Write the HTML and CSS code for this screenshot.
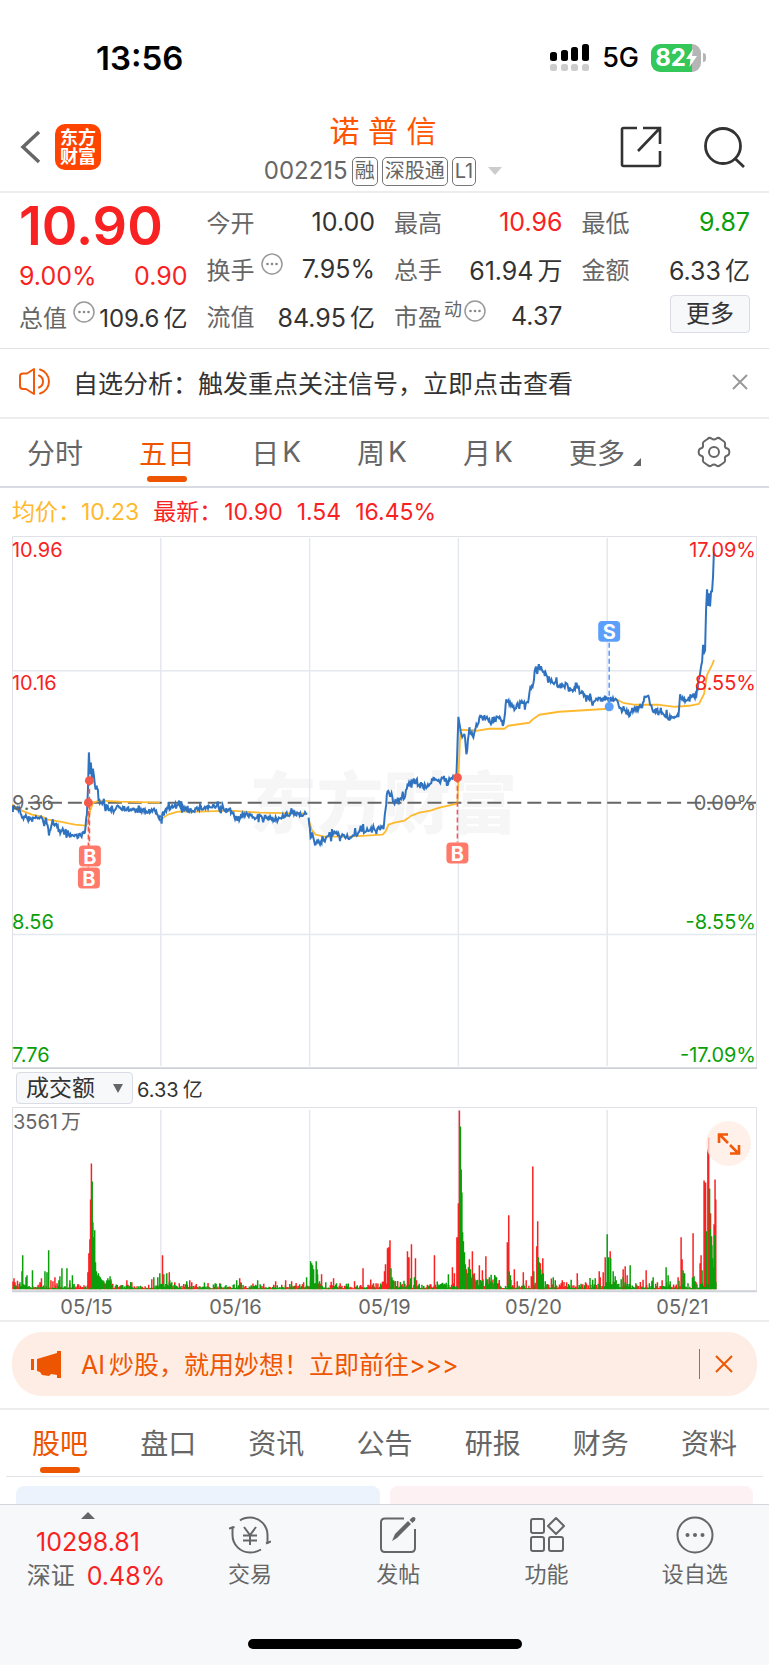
FILE: index.html
```html
<!DOCTYPE html>
<html lang="zh-CN">
<head>
<meta charset="utf-8">
<meta name="viewport" content="width=device-width, initial-scale=1">
<title>诺普信 002215</title>
<link rel="stylesheet" href="styles.css">
</head>
<body>
<div class="app">
  <div class="status">
    <span class="status-time">13:56</span>
    <div class="status-right">
      <svg class="signal" width="40" height="28" viewBox="0 0 40 28" aria-hidden="true">
        <g fill="#000"><rect x="0" y="8" width="7" height="9" rx="2.5"/><rect x="11" y="6" width="7" height="11" rx="2.5"/><rect x="21" y="3" width="7" height="14" rx="2.5"/><rect x="32" y="0" width="7" height="17" rx="2.5"/></g>
        <g fill="#ccc"><rect x="0" y="20" width="7" height="7" rx="2.5"/><rect x="11" y="20" width="7" height="7" rx="2.5"/><rect x="21" y="20" width="7" height="7" rx="2.5"/><rect x="32" y="20" width="7" height="7" rx="2.5"/></g>
      </svg>
      <span class="status-net">5G</span>
      <span class="battery"><span class="battery-num">82</span><svg width="11" height="18" viewBox="0 0 11 18" aria-hidden="true"><path d="M7 0L0 10h4.500L3.500 18 11 7H6z" fill="#fff"/></svg></span>
      <span class="battery-nub"></span>
    </div>
  </div>

  <header class="header">
    <div class="header-left">
      <button class="icon-btn" aria-label="返回"><svg width="21" height="34" viewBox="0 0 21 34"><path d="M19 2L3 17l16 15" fill="none" stroke="#666" stroke-width="3.500"/></svg></button>
      <span class="logo">东方<br>财富</span>
    </div>
    <div class="header-mid">
      <h1 class="name">诺 普 信</h1>
      <div class="code-row">
        <span class="code">002215</span><span class="tag">融</span><span class="tag">深股通</span><span class="tag">L1</span>
        <button class="icon-btn caret" aria-label="展开"><svg width="14" height="8" viewBox="0 0 14 8"><path d="M0 0h14L7 8z" fill="#ccc"/></svg></button>
      </div>
    </div>
    <div class="header-right">
      <button class="icon-btn" aria-label="分享"><svg width="42" height="42" viewBox="0 0 42 42"><g fill="none" stroke="#333" stroke-width="2.600"><path d="M17 2H3.500Q2 2 2 3.500v35Q2 40 3.500 40H38.500Q40 40 40 38.500V25"/><path d="M23 2h17v16M40 2L18 25"/></g></svg></button>
      <button class="icon-btn" aria-label="搜索"><svg width="42" height="42" viewBox="0 0 42 42"><g fill="none" stroke="#333" stroke-width="2.800"><circle cx="19" cy="20" r="17.500"/><path d="M30.500 32l9.500 9"/></g></svg></button>
    </div>
  </header>

  <section class="quote">
    <div class="col">
      <div class="price up">10.90</div>
      <div class="change up"><span>9.00%</span><span>0.90</span></div>
      <div class="row row-last"><span class="label">总值</span><svg class="more-dot" viewBox="0 0 22 22"><use href="#dots"/></svg><span class="value">109.6<span class="unit">亿</span></span></div>
    </div>
    <div class="col">
      <div class="row"><span class="label">今开</span><span class="value">10.00</span></div>
      <div class="row"><span class="label">换手</span><svg class="more-dot" viewBox="0 0 22 22"><use href="#dots"/></svg><span class="value">7.95%</span></div>
      <div class="row"><span class="label">流值</span><span class="value">84.95<span class="unit">亿</span></span></div>
    </div>
    <div class="col">
      <div class="row"><span class="label">最高</span><span class="value up">10.96</span></div>
      <div class="row"><span class="label">总手</span><span class="value">61.94<span class="unit">万</span></span></div>
      <div class="row"><span class="label">市盈</span><span class="sup">动</span><svg class="more-dot tight" viewBox="0 0 22 22"><use href="#dots"/></svg><span class="value">4.37</span></div>
    </div>
    <div class="col">
      <div class="row"><span class="label">最低</span><span class="value down">9.87</span></div>
      <div class="row"><span class="label">金额</span><span class="value">6.33<span class="unit">亿</span></span></div>
      <div class="row"><button class="more-btn">更多</button></div>
    </div>
  </section>

  <section class="notice">
    <svg width="34" height="30" viewBox="0 0 34 30" aria-hidden="true"><g fill="none" stroke="#f05a0a" stroke-width="2" stroke-linecap="round" stroke-linejoin="round"><path d="M15 2v25L7 22H4Q1 22 1 19V9q0-2.500 3-2.500h4z"/><path d="M20 8.500a6.500 6.500 0 0 1 0 12M21 2.500a12.500 12.500 0 0 1 0 24"/></g></svg>
    <span class="notice-text">自选分析：触发重点关注信号，立即点击查看</span>
    <button class="icon-btn" aria-label="关闭提示"><svg width="18" height="18" viewBox="0 0 18 18"><path d="M2 2l14 14M16 2L2 16" stroke="#999" stroke-width="2"/></svg></button>
  </section>

  <nav class="periods">
    <button class="period">分时</button>
    <button class="period active">五日</button>
    <button class="period">日<span class="k">K</span></button>
    <button class="period">周<span class="k">K</span></button>
    <button class="period">月<span class="k">K</span></button>
    <button class="period">更多<svg class="corner" width="8" height="8" viewBox="0 0 8 8"><path d="M8 0v8H0z" fill="#666"/></svg></button>
    <button class="period" aria-label="设置"><svg width="34" height="32" viewBox="0 0 34 32"><g fill="none" stroke="#666" stroke-width="2"><path stroke-linejoin="round" d="M10.500 3Q12.500 1 14.500 2.500Q17 4.500 19.500 2.500Q21.500 1 23.500 3L27 5.500Q28.500 6.500 28 9Q27.500 12 30.500 12.500Q32.500 13.500 32.300 16Q32.500 18.500 30.500 19.500Q27.500 20 28 23Q28.500 25.500 27 26.500L23.500 29Q21.500 31 19.500 29.500Q17 27.500 14.500 29.500Q12.500 31 10.500 29L7 26.500Q5.500 25.500 6 23Q6.500 20 3.500 19.500Q1.500 18.500 1.700 16Q1.500 13.500 3.500 12.500Q6.500 12 6 9Q5.500 6.500 7 5.500Z"/><circle cx="17" cy="16" r="5"/></g></svg></button>
  </nav>

  <div class="legend">
    <span class="avg">均价：10.23</span><span class="up">最新：</span><span class="up">10.90</span><span class="up">1.54</span><span class="up">16.45%</span>
  </div>

  <main class="charts">
    <svg class="chart" viewBox="12 536 746 534" role="img" aria-label="五日分时图">
      <text class="watermark" x="250" y="828">东方财富</text>
      <g class="grid"><path d="M161 538V1067M310 538V1067M459 538V1067M608 538V1067M13 671H757M13 935H757"/></g>
      <path class="frame" d="M12.500 1069V536.500H757.500V1069"/><path class="base" d="M12 1069H758"/>
      <path class="zero" d="M28 803H757"/>
      <g id="priceLines"></g>
      <g class="buy">
        <path d="M89.500 781V846M88.500 803V868M458 778V843"/>
        <circle cx="89.500" cy="781" r="4.500"/><circle cx="88.500" cy="803" r="4.500"/><circle cx="458" cy="778" r="4.500"/>
        <rect x="79" y="846" width="22" height="21" rx="4"/><rect x="78" y="868" width="22" height="21" rx="4"/><rect x="447" y="843" width="22" height="21" rx="4"/>
      </g>
      <g class="sell"><path d="M610 643V704"/><circle cx="610" cy="707" r="4.500"/><rect x="599" y="621" width="22" height="21" rx="4"/></g>
      <g class="mark"><text x="90" y="864">B</text><text x="89" y="886">B</text><text x="458" y="861">B</text><text x="610" y="639">S</text></g>
      <g class="axis">
        <text class="red" x="12" y="557">10.96</text><text class="red" x="12" y="690">10.16</text><text x="12" y="810">9.36</text><text class="green" x="12" y="930">8.56</text><text class="green" x="12" y="1063">7.76</text>
        <g class="end"><text class="red" x="757" y="557">17.09%</text><text class="red" x="757" y="690">8.55%</text><text x="757" y="810">0.00%</text><text class="green" x="757" y="930">-8.55%</text><text class="green" x="757" y="1063">-17.09%</text></g>
      </g>
    </svg>

    <div class="indicator">
      <span class="select-wrap"><select class="select" aria-label="指标"><option>成交额</option></select><svg class="select-arrow" width="10" height="9" viewBox="0 0 10 9"><path d="M0 0h10L5 9z" fill="#666"/></svg></span>
      <span class="turnover">6.33<span class="unit">亿</span></span>
    </div>

    <div class="volume">
      <svg class="chart" viewBox="12 1107 746 186" role="img" aria-label="成交额柱状图">
        <g class="grid"><path d="M161 1110V1289M310 1110V1289M459 1110V1289M608 1110V1289"/></g>
        <path class="frame" d="M12.500 1290V1107.500H757.500V1290"/><path class="base" d="M12 1291.500H758"/>
        <g id="volumeBars"></g>
        <text class="vol-label" x="13" y="1129">3561<tspan dx="3">万</tspan></text>
      </svg>
      <button class="expand" aria-label="放大"><svg width="24" height="24" viewBox="0 0 24 24"><g fill="none" stroke="#f05a0a" stroke-width="2.600"><path d="M2 11V2.500H11M3 3l8 8M22 13v8.500H13M21 21l-8-8"/></g></svg></button>
    </div>
    <div class="dates"><span>05/15</span><span>05/16</span><span>05/19</span><span>05/20</span><span>05/21</span></div>
  </main>

  <section class="promo-wrap">
    <div class="promo">
      <svg width="30" height="27" viewBox="0 0 30 27" aria-hidden="true"><path d="M0 8h3v11H0zM6 8L26 2V0h4v27h-4v-3l-6-1-2 2-7-1-2-3-3-1z" fill="#ee5500"/></svg>
      <a class="promo-link" href="#ai">AI<span class="unit">炒股，就用妙想！立即前往&gt;&gt;&gt;</span></a>
      <span class="promo-bar"></span>
      <button class="icon-btn" aria-label="关闭广告"><svg width="18" height="18" viewBox="0 0 18 18"><path d="M1 1l16 16M17 1L1 17" stroke="#ee5500" stroke-width="2"/></svg></button>
    </div>
  </section>

  <nav class="sections">
    <button class="section-tab active">股吧</button><button class="section-tab">盘口</button><button class="section-tab">资讯</button><button class="section-tab">公告</button><button class="section-tab">研报</button><button class="section-tab">财务</button><button class="section-tab">资料</button>
  </nav>
  <div class="cards"><div class="card blue"></div><div class="card pink"></div></div>

  <footer class="bottom">
    <div class="bottom-row">
      <button class="index">
        <svg width="14" height="7" viewBox="0 0 14 7"><path d="M0 7h14L7 0z" fill="#666"/></svg>
        <span class="up">10298.81</span>
        <span class="index-line"><span>深证</span><span class="up">0.48%</span></span>
      </button>
      <button class="tool"><svg width="42" height="38" viewBox="0 0 42 38"><g fill="none" stroke="#666" stroke-width="2"><path d="M11 4.500Q15 1.500 21 1.500A17.500 17.500 0 0 1 38.500 19V27.500"/><path d="M32 33.500Q27 36.500 21 36.500A17.500 17.500 0 0 1 3.500 19V10.500"/><path d="M0 12.500L5.500 11M42 25.500L37 27.500"/><path d="M15 11l6 8 6-8M21 19v10M14 19.500h14M14 24.500h14"/></g></svg><span>交易</span></button>
      <button class="tool"><svg width="38" height="38" viewBox="0 0 38 38"><path d="M25 2.500H6Q2 2.500 2 6.500V32Q2 36 6 36H32Q36 36 36 32V13" fill="none" stroke="#666" stroke-width="2"/><path d="M13 25l3-7L29 5l3 3L18 22z" fill="#666"/><path d="M30.500 4L33 1.500q2-1 3 0t0 3L33.500 7z" fill="#666"/></svg><span>发帖</span></button>
      <button class="tool"><svg width="38" height="38" viewBox="0 0 38 38"><g fill="none" stroke="#666" stroke-width="2"><rect x="3" y="3" width="13" height="14" rx="2"/><rect x="3" y="21" width="13" height="14" rx="2"/><rect x="21" y="21" width="14" height="14" rx="2"/><path stroke-linejoin="round" d="M28 2l8 8-8 8-8-8z"/></g></svg><span>功能</span></button>
      <button class="tool"><svg width="38" height="38" viewBox="0 0 38 38"><circle cx="19" cy="19" r="17.500" fill="none" stroke="#666" stroke-width="2"/><g fill="#666"><circle cx="11.500" cy="19" r="2"/><circle cx="19" cy="19" r="2"/><circle cx="26.500" cy="19" r="2"/></g></svg><span>设自选</span></button>
    </div>
    <div class="home"></div>
  </footer>
</div>
<svg class="defs" aria-hidden="true"><symbol id="dots" viewBox="0 0 22 22"><circle cx="11" cy="11" r="10" fill="none" stroke="#999" stroke-width="1.500"/><g fill="#888"><circle cx="6.500" cy="11" r="1.300"/><circle cx="11" cy="11" r="1.300"/><circle cx="15.500" cy="11" r="1.300"/></g></symbol></svg>
<script src="chart.js"></script>
</body>
</html>
```

FILE: styles.css
```css
* { box-sizing: border-box; }
body { margin: 0; background: #fff; color: #333; font-family: Inter, "Noto Sans CJK SC", sans-serif; }
button { border: 0; padding: 0; background: none; font: inherit; color: inherit; cursor: pointer; }
svg { display: block; flex: none; }
.defs { position: absolute; width: 0; height: 0; }
.app { display: flex; flex-direction: column; min-height: 100vh; }
.icon-btn { display: flex; align-items: center; }
.up { color: #f92222; }
.down { color: #0a9f0a; }

.status { display: flex; justify-content: space-between; align-items: center; height: 115px; padding: 0 63px 0 96px; color: #000; }
.status-time { font-size: 33px; font-weight: 600; }
.status-right { display: flex; align-items: center; }
.status-net { margin: 0 12px; font-size: 27px; font-weight: 500; }
.battery { display: flex; align-items: center; justify-content: center; width: 50px; height: 28px; border-radius: 9px; background: linear-gradient(90deg, #34c759 82%, #b5b5b5 82%); color: #fff; }
.battery-num { font-size: 24px; font-weight: 700; }
.battery-nub { width: 3px; height: 9px; margin-left: 2px; border-radius: 0 3px 3px 0; background: #b5b5b5; }

.header { display: grid; grid-template-columns: 1fr auto 1fr; align-items: center; height: 78px; padding: 0 23px 0 20px; border-bottom: 2px solid #ededed; }
.header-left { display: flex; align-items: center; gap: 14px; padding-bottom: 12px; }
.logo { padding: 4px 5px; border-radius: 10px; background: #ff4400; color: #fff; font-size: 18px; line-height: 19px; font-weight: 700; }
.header-mid { display: flex; flex-direction: column; align-items: center; gap: 5px; padding-bottom: 2px; }
.name { margin: 0; color: #ff5500; font-size: 30px; line-height: 33px; font-weight: 400; }
.code-row { display: flex; align-items: center; gap: 4px; color: #666; font-size: 24px; line-height: 36px; }
.tag { padding: 0 2px; border: 1px solid #777; border-radius: 5px; font-size: 20px; line-height: 27px; }
.caret { margin-left: 8px; }
.header-right { display: flex; justify-content: flex-end; gap: 42px; padding-bottom: 12px; }

.quote { display: grid; grid-template-columns: repeat(4, 1fr); column-gap: 19px; padding: 5px 19px 9px; border-bottom: 1px solid #e2e2e2; }
.row { display: flex; align-items: center; height: 47px; }
.label { color: #666; font-size: 24px; }
.value { margin-left: auto; font-size: 25px; white-space: nowrap; }
.unit { margin-left: 4px; }
.more-dot { width: 22px; height: 22px; margin: 0 0 10px 6px; }
.more-dot.tight { margin-left: 2px; }
.sup { margin: 0 0 16px 2px; color: #666; font-size: 18px; }
.price { height: 55px; font-size: 54px; line-height: 55px; font-weight: 600; }
.change { display: flex; justify-content: space-between; height: 46px; font-size: 25px; line-height: 46px; }
.row-last { height: 35px; }
.row-last .value { font-size: 24px; }
.more-btn { width: 80px; height: 38px; margin: 0 0 4px auto; border: 1px solid #d9dce5; border-radius: 4px; background: #f7f8fa; font-size: 24px; line-height: 32px; }

.notice { display: flex; align-items: center; height: 70px; padding: 0 20px 2px 19px; border-bottom: 2px solid #ededed; }
.notice-text { flex: 1; margin-left: 20px; font-size: 25px; }

.periods { display: flex; justify-content: space-between; height: 69px; padding: 0 38px 2px 27px; border-bottom: 2px solid #d9dbe3; color: #666; }
.period { position: relative; display: flex; align-items: center; font-size: 28px; }
.k { margin-left: 3px; }
.corner { margin: 20px 0 0 8px; }
.active { color: #ee5500; }
.active::after { content: ""; position: absolute; bottom: 2px; left: 50%; width: 40px; height: 6px; margin-left: -20px; border-radius: 3px; background: #ee5500; }

.legend { display: flex; gap: 14px; padding: 0 12px; height: 48px; font-size: 23px; line-height: 48px; }
.legend .avg { color: #ffb92e; }
.legend .up:nth-child(2) { margin-right: -12px; }

.charts { padding: 0 12px; border-bottom: 2px solid #ededed; }
.chart { width: 100%; height: auto; font-family: Inter, "Noto Sans CJK SC", sans-serif; }
.grid { fill: none; stroke: #e4e8ef; stroke-width: 1.500; }
.frame { fill: none; stroke: #dfe1e6; }
.base { stroke: #cfd1d8; stroke-width: 2; }
.zero { stroke: #666; stroke-width: 2; stroke-dasharray: 14 6; }
.watermark { fill: #f6f6f6; font-size: 67px; font-weight: 900; }
.line-avg { fill: none; stroke: #ffb92e; stroke-width: 1.800; stroke-linejoin: round; }
.line-price { fill: none; stroke: #2f73c0; stroke-width: 2; }
.buy { fill: #ff7a6b; }
.buy circle { fill: #f35a4c; }
.buy path { stroke: #f35a4c; stroke-width: 1.600; stroke-dasharray: 5 3; }
.sell { fill: #5c9efc; }
.sell path { stroke: #5c9efc; stroke-width: 1.600; stroke-dasharray: 5 3; }
.mark { fill: #fff; font-size: 20px; font-weight: 700; text-anchor: middle; }
.axis { fill: #666; font-size: 20px; }
.end { text-anchor: end; }
.axis .red, .red { fill: #f92222; }
.axis .green, .green { fill: #0a9f0a; }
.vol-label { fill: #666; font-size: 20px; }
.bar-up { stroke: #f92222; stroke-width: 1.500; fill: none; }
.bar-down { stroke: #0a9f0a; stroke-width: 1.500; fill: none; }

.indicator { display: flex; align-items: center; gap: 4px; height: 38px; padding-left: 4px; }
.select-wrap { position: relative; }
.select { width: 117px; height: 32px; padding: 0 9px; border: 1px solid #d9dce5; border-radius: 4px; background: #f7f8fa; color: #333; font: 23px Inter, "Noto Sans CJK SC", sans-serif; line-height: 30px; appearance: none; }
.select-arrow { position: absolute; top: 12px; right: 10px; pointer-events: none; }
.turnover { font-size: 20px; }
.volume { position: relative; }
.expand { position: absolute; top: 14px; right: 6px; display: flex; align-items: center; justify-content: center; width: 45px; height: 45px; border-radius: 50%; background: rgba(255, 235, 225, .75); }
.dates { display: grid; grid-template-columns: repeat(5, 1fr); height: 27px; color: #666; font-size: 20px; line-height: 28px; text-align: center; }

.promo-wrap { padding: 10px 12px 12px; border-bottom: 2px solid #ededed; }
.promo { display: flex; align-items: center; height: 64px; padding: 0 24px 0 19px; border-radius: 30px; background: #feede4; }
.promo-link { flex: 1; margin: 0 0 2px 20px; color: #ee5500; font-size: 25px; text-decoration: none; }
.promo-bar { width: 1px; height: 30px; margin-right: 15px; background: #ee5500; }

.sections { display: grid; grid-template-columns: repeat(7, 1fr); height: 67px; margin: 0 6px; border-bottom: 1px solid #e2e4ea; color: #666; }
.section-tab { position: relative; padding-bottom: 2px; font-size: 28px; }
.section-tab.active { color: #ee5500; }
.section-tab.active::after { bottom: 3px; }
.cards { display: grid; grid-template-columns: 1fr 1fr; gap: 10px; padding: 9px 16px 0; }
.card { height: 18px; border-radius: 8px 8px 0 0; }
.blue { background: #edf3fd; }
.pink { background: #fef1f3; }

.bottom { display: flex; flex: 1; flex-direction: column; justify-content: space-between; align-items: center; padding-bottom: 16px; border-top: 1px solid #d3d5dc; background: #f7f8fa; }
.bottom-row { display: grid; grid-template-columns: 176px repeat(4, 1fr); width: 100%; }
.index { display: flex; flex-direction: column; align-items: center; padding-top: 7px; font-size: 25px; line-height: 34px; }
.index svg { margin-bottom: 6px; }
.index-line { display: flex; gap: 12px; padding-left: 16px; color: #666; font-size: 24px; }
.index-line .up { font-size: 25px; }
.tool { display: flex; flex-direction: column; align-items: center; gap: 5px; padding-top: 11px; color: #666; font-size: 22px; line-height: 30px; }
.home { width: 274px; height: 10px; border-radius: 5px; background: #000; }
```

FILE: chart.js
```js
const NS = "http://www.w3.org/2000/svg";
let seed = 7;
function rand() { seed = (seed * 16807) % 2147483647; return seed / 2147483647; }
function addPath(parent, cls, d) {
  const p = document.createElementNS(NS, "path");
  p.setAttribute("class", cls);
  p.setAttribute("d", d);
  parent.appendChild(p);
}
function parse(s) { return s.trim().split(/\s+/).map(t => t.split(",").map(Number)); }

const average = [
  "12,805 22,811 32,815 42,817 48,820 60,822 75,825 86,826 88,824 90,812 93,803 100,801 120,802 160,803",
  "161,820 168,815 178,812 200,812 230,811 260,813 308,814",
  "309,820 312,830 316,835 325,837 350,837 383,835 386,832 389,825 395,823 405,821 412,816 420,813 431,811 440,808 458,804",
  "458,803 461,730 478,731 490,729 505,729 509,726 530,723 533,720 540,715 560,712 609,709",
  "609,700 618,700 624,703 636,705 660,705 676,707 690,706 700,704 705,694 708,675 713,665 715,660"
];
const price = [
  "12,806 16,808 20,811 22,817 28,819 30,821 36,818 41,818 46,824 49,830 52,827 57,825 62,830 68,833 72,836 80,836 85,833 87,815 88,790 89,754 90,775 91,759 92,778 93,768 94,778 95,785 98,797 100,803 104,803 108,809 112,813 117,806 122,808 130,810 138,811 146,812 155,811 158,816 161,819",
  "161,819 164,814 169,809 174,805 180,807 187,811 194,810 205,808 214,807 222,809 232,812 237,820 246,814 252,817 262,818 272,819 280,820 287,815 296,814 307,814",
  "309,818 311,838 313,834 316,844 322,843 326,839 334,834 342,836 350,838 358,834 362,831 370,831 380,829 384,829 386,808 388,792 392,798 395,803 400,799 405,797 408,785 412,783 415,780 420,786 426,787 431,784 434,778 440,780 446,781 452,780 457,776 459,718 462,736 465,735 467,750 470,730 474,738 477,726 480,719 482,715 486,717 490,721 494,723 498,718 505,720 507,700 510,703 515,708 520,704 528,703 531,688 534,685 536,668 538,672 541,665 543,672 548,676 553,681 558,685 563,686 568,685 572,692 578,687 582,692 587,697 594,701 600,700 609,699 613,700 618,698 621,709 626,711 630,715 636,709 643,706 646,695 650,698 653,710 660,711 665,714 670,718 678,717 680,715 681,697 686,701 692,695 698,694 700,678 703,663 704,647 706,650 707,612 708,591 709,604 710,592 711,605 712,592 713,590 714,570 715,548"
];

const lines = document.getElementById("priceLines");
average.forEach(s => addPath(lines, "line-avg", "M" + parse(s).map(p => p.join(" ")).join("L")));
price.forEach(s => {
  const pts = parse(s);
  let d = "M" + pts[0].join(" ");
  for (let i = 1; i < pts.length; i++) {
    const [x0, y0] = pts[i - 1], [x1, y1] = pts[i];
    const n = Math.max(1, Math.round((x1 - x0) / 0.8));
    for (let k = 1; k <= n; k++) {
      const spike = rand() < 0.16 ? 14 : 5;
      const jitter = (rand() - 0.5) * spike;
      d += "L" + (x0 + (x1 - x0) * k / n).toFixed(1) + " " + (y0 + (y1 - y0) * k / n + jitter).toFixed(1);
    }
  }
  addPath(lines, "line-price", d);
});

/* x, height of each notable bar */
const up = "14,11 15,7 41.5,11 51,9 53,8 55,12 57,6 88,17 89,36 90,50 90.7,90 91.5,126 93.8,52 127,9 132,7 152,10 162.7,34 169.5,17 175,7 190,9 192,7 220,6 240,11 241,7 276,8 286,9 292,8 304,7 322,15 334,11 355,8 363.5,21 374,6 385,18 386,25 388,41 389,42 390.5,49 408,38 409.5,32 412,45 416,31 435,34 453,22 455,16 457.5,52 459,86 460,179 461.8,120 467,20 470,30 473,38 475,16 480,24 483,19 486.5,33 508,47 509.4,74 515,20 524,17 532,13 533.5,123 537.5,43 538.4,68 541,26 543.5,31 563,9 578,16 600,18 601,12 604,17 606,32 611,38 624,20 626,23 628,14 647,19 663,9 679,12 682,52 683,30 694,56 701,26 702,34 705,109 706.5,107 708.8,141 709.6,152 711.5,76 712.5,53 715,65 716,110 716.7,90";
const down = "20,7 22,18 22.7,34 26,12 27,14 32.5,19 45,18 47,17 48.7,39 59,9 60,13 62,21 67,21 70,9 72.5,14 92.3,108 93,67 94.8,59 95.6,27 96.5,18 97.5,14 98.5,16 99.5,13 100.5,12 101.5,10 103,9 104,8 107,9 108,11 111,8 154,12 158,12 160,16 164,15 167,16 170,9 172,7 187,8 237,9 258,9 307,12 311,28 312,26 313,24 314,20 316.6,28 317.5,20 318,15 320,8 337,6 391.5,21 392.5,12 394,9 396,8 411,11 415,12 449,15 461,163 462.5,97 463.2,57 464,48 465,37 466,25 468,16 469,22 471,20 474,15 477,9 490,12 509.9,18 511,14 534.5,18 539,32 540,27 541.5,20 543,15 544,16 546,8 554,12 556,9 596,11 608,55 609.5,32 611.5,31 614,18 616,13 617,9 622,10 624,12 631,24 653,8 654,12 667,22 669,14 671,8 684,19 685.5,16 695,13 703,19 707.5,58 710.5,101 711.2,60 712.8,44 713.5,31 714.5,22 715.5,54";
const base = 1289.5;
const groups = { "bar-up": "", "bar-down": "" };
for (let x = 13; x < 717; x += 0.9) {
  const day = (x - 12) % 149;
  const busy = x > 370 ? 6 : 3.5;
  const tail = x > 93 && x < 112 ? 6 : x > 459 && x < 500 ? 9 : day < 12 ? 4 : 0;
  const h = 1 + rand() * rand() * busy * 1.6 + rand() * tail + (rand() < 0.06 ? 3 : 0);
  groups[rand() < 0.5 ? "bar-up" : "bar-down"] += `M${x.toFixed(1)} ${base}v-${h.toFixed(1)}`;
}
const bars = document.getElementById("volumeBars");
parse(up).forEach(([x, h]) => { groups["bar-up"] += `M${x} ${base}v-${h}`; });
parse(down).forEach(([x, h]) => { groups["bar-down"] += `M${x} ${base}v-${h}`; });
Object.entries(groups).forEach(([cls, d]) => addPath(bars, cls, d));
```
